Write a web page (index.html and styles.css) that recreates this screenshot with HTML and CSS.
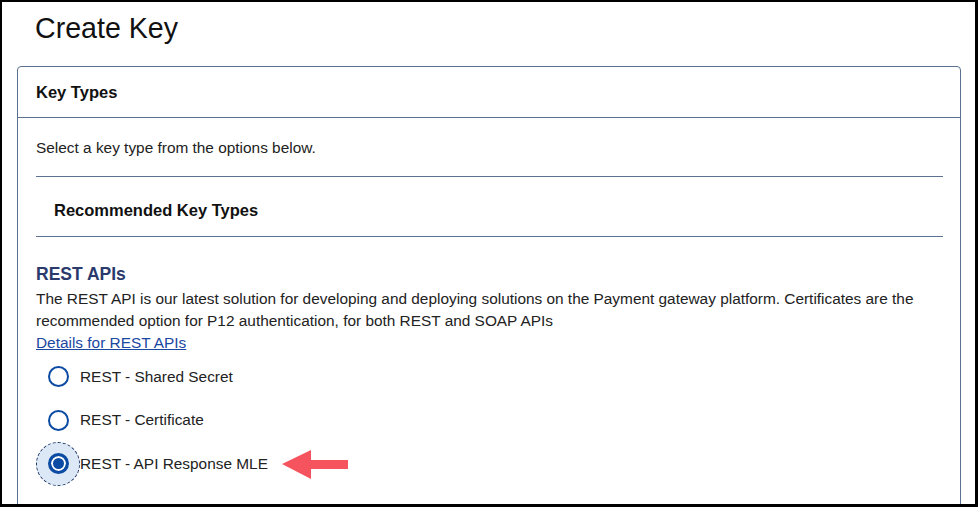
FILE: index.html
```html
<!DOCTYPE html>
<html lang="en">
<head>
  <meta charset="UTF-8" />
  <meta name="viewport" content="width=device-width, initial-scale=1" />
  <title>Create Key</title>
  <link rel="stylesheet" href="styles.css">
</head>
<body>
  <div class="frame">
    <h1 class="page-title">Create Key</h1>

    <div class="card">
      <div class="card-header">Key Types</div>
      <div class="card-body">
        <p class="intro">Select a key type from the options below.</p>

        <div class="section-title">Recommended Key Types</div>

        <div class="group">
          <h2 class="group-title">REST APIs</h2>
          <p class="group-text">The REST API is our latest solution for developing and deploying solutions on the Payment gateway platform. Certificates are the recommended option for P12 authentication, for both REST and SOAP APIs</p>
          <a class="group-link" href="#">Details for REST APIs</a>

          <div class="options">
            <label class="option">
              <span class="radio"><span class="dot"></span></span>
              <span class="option-text">REST - Shared Secret</span>
            </label>
            <label class="option">
              <span class="radio"><span class="dot"></span></span>
              <span class="option-text">REST - Certificate</span>
            </label>
            <label class="option selected">
              <span class="radio"><span class="dot"></span></span>
              <span class="option-text">REST - API Response MLE</span>
              <svg class="arrow" width="66" height="30" viewBox="0 0 66 30">
                <polygon points="0,14 29,0 29,10 66,10 66,19 29,19 29,29" fill="#f5545e" />
              </svg>
            </label>
          </div>
        </div>
      </div>
    </div>
  </div>
</body>
</html>
```

FILE: styles.css
```css
html, body {
  margin: 0;
  height: 100%;
}
body {
  font-family: "Liberation Sans", Arial, sans-serif;
  color: #222;
  background: #000;
}
.frame {
  box-sizing: border-box;
  height: 507px;
  margin: 0;
  border-style: solid;
  border-color: #000;
  border-width: 2px 3px 3px 2px;
  background: #fff;
  padding: 9px 14px 0 15px;
  overflow: hidden;
}
.page-title {
  margin: 0 0 21px 18px;
  font-size: 28.6px;
  line-height: 34px;
  font-weight: normal;
  color: #111;
}
.card {
  border: 1px solid #5b7390;
  border-radius: 4px;
  height: 600px;
}
.card-header {
  height: 50px;
  display: flex;
  align-items: center;
  padding: 0 18px;
  border-bottom: 1px solid #5b7390;
  font-size: 16.5px;
  font-weight: bold;
  color: #111;
}
.card-body {
  padding: 20px 17px 0 18px;
}
.intro {
  margin: 0;
  font-size: 15.4px;
  line-height: 20px;
  padding-bottom: 18px;
  border-bottom: 1px solid #5b7390;
}
.section-title {
  padding: 22px 18px 15px;
  font-size: 16.5px;
  line-height: 22px;
  font-weight: bold;
  color: #111;
  border-bottom: 1px solid #5b7390;
}
.group {
  padding-top: 25px;
}
.group-title {
  margin: 0 0 2px;
  font-size: 17.5px;
  line-height: 24px;
  font-weight: bold;
  color: #2b3a6c;
}
.group-text {
  margin: 0;
  font-size: 15.4px;
  line-height: 22px;
  padding-right: 10px;
}
.group-link {
  font-size: 15.4px;
  line-height: 22px;
  color: #1a47a0;
}
.options {
  margin-top: 1px;
}
.option {
  display: flex;
  align-items: center;
  height: 43.5px;
  font-size: 15.4px;
  color: #222;
  cursor: pointer;
}
.radio {
  box-sizing: border-box;
  width: 44px;
  height: 44px;
  border-radius: 50%;
  display: flex;
  align-items: center;
  justify-content: center;
  flex-shrink: 0;
}
.dot {
  box-sizing: border-box;
  width: 21px;
  height: 21px;
  border: 2px solid #0b4ba3;
  border-radius: 50%;
  background: #fff;
}
.selected .radio {
  border: 1px dashed #1d3466;
  background: #dde8f6;
}
.selected .dot {
  border-width: 3px;
  background: #0b4ba3;
  box-shadow: inset 0 0 0 2px #fff;
}
.arrow {
  margin-left: 14px;
  margin-top: 2px;
}
```
